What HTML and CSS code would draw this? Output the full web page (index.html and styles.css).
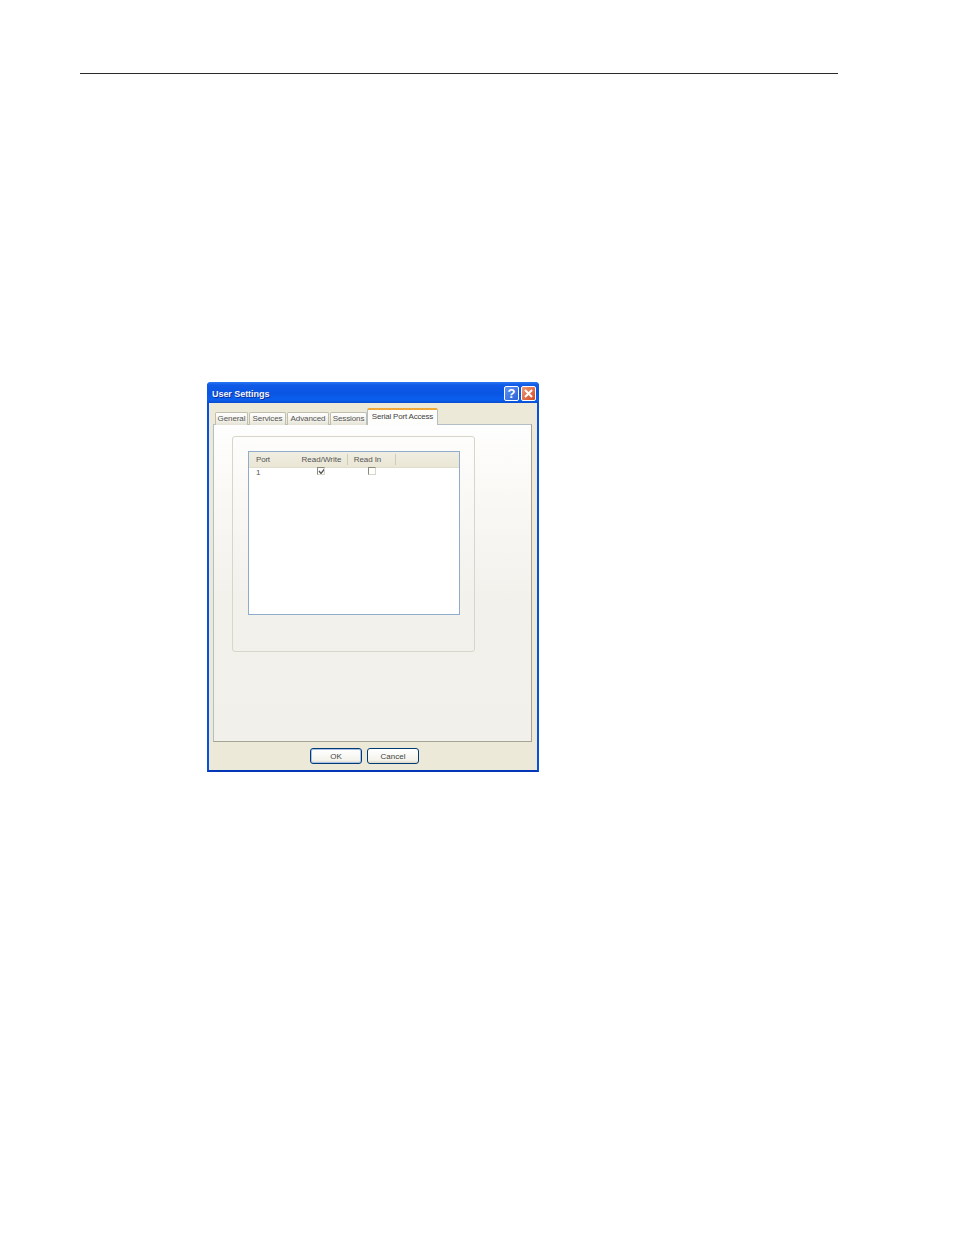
FILE: index.html
```html
<!DOCTYPE html>
<html lang="en">
<head>
<meta charset="utf-8">
<title>User Settings</title>
<link rel="stylesheet" href="styles.css">
</head>
<body>
<div class="rule"></div>
<div class="dialog">
  <div class="titlebar">
    <span class="title">User Settings</span>
    <span class="winbtn help">?</span>
    <span class="winbtn close">
      <svg width="11" height="11" viewBox="0 0 11 11"><path d="M2 2L9 9M9 2L2 9" stroke="#fff" stroke-width="2" fill="none"/></svg>
    </span>
  </div>
  <div class="body">
    <div class="tabs">
      <div class="tab t1">General</div>
      <div class="tab t2">Services</div>
      <div class="tab t3">Advanced</div>
      <div class="tab t4">Sessions</div>
      <div class="tab active">Serial Port Access</div>
    </div>
    <div class="panel">
      <div class="group">
        <div class="list">
          <div class="head">
            <div class="hc c1">Port</div>
            <div class="hc c2">Read/Write</div>
            <div class="hc c3">Read In</div>
          </div>
          <div class="row">
            <div class="cell c1">1</div>
            <div class="cell c2"><span class="check"><svg width="7" height="7" viewBox="0 0 7 7"><path d="M1 3L3 5.5L6.5 1" stroke="#555" stroke-width="1.3" fill="none"/></svg></span></div>
            <div class="cell c3"><span class="check off"></span></div>
          </div>
        </div>
      </div>
    </div>
    <div class="buttons">
      <div class="btn default">OK</div>
      <div class="btn">Cancel</div>
    </div>
  </div>
</div>
</body>
</html>
```
FILE: styles.css
```css
html, body { margin: 0; padding: 0; background: #fff; }
body { font-family: "Liberation Sans", Arial, sans-serif; height: 1235px; overflow: hidden; }
.rule { height: 1px; width: 758px; margin: 73px 0 0 80px; background: #2a2a2a; }
.dialog {
  box-sizing: border-box; width: 332px; height: 390px; margin: 308px 0 0 207px;
  border: 2px solid #0a50d8; border-top: 0; border-radius: 4px 4px 0 0;
  background: #ece9d8; display: flex; flex-direction: column;
  border-bottom-color: #0437b8;
}
.titlebar {
  height: 21px; margin: 0 -2px; padding: 2px 3px 0 5px; box-sizing: border-box; display: flex; align-items: center; gap: 2px;
  flex: none;
  border-radius: 4px 4px 0 0;
  background: linear-gradient(#2a78f4 0, #0f5ae6 3px, #0a55e2 50%, #0b5fee 85%, #0a4cd0 100%);
}
.title { flex: 1; color: #f4f6fc; font-size: 9px; line-height: 13px; padding-top: 2px; font-weight: bold; text-shadow: 1px 1px 0 #0a2f9c; letter-spacing: -0.05px; }
.winbtn {
  box-sizing: border-box; width: 15px; height: 15px; border: 1px solid #fff; border-radius: 2px; margin-top: -1px;
  display: flex; align-items: center; justify-content: center; color: #fff; font-weight: bold; font-size: 13px; line-height: 1;
}
.help { background: linear-gradient(135deg, #5f93f2, #2a62d8); }
.close { background: linear-gradient(135deg, #ee9a78, #d04c24); }
.body { flex: 1; display: flex; flex-direction: column; padding: 0 4px; min-height: 0; }
.tabs { height: 22px; flex: none; display: flex; align-items: flex-end; padding-left: 2px; gap: 1px; margin-bottom: -1px; position: relative; z-index: 1; }
.tab {
  box-sizing: border-box; height: 13px; font-size: 8px; line-height: 11px; text-align: center; color: #555;
  border: 1px solid #c0bead; border-bottom: 0; border-radius: 2px 2px 0 0;
  background: linear-gradient(#fff, #f0efe6 70%, #e4e2d4);
  letter-spacing: -0.1px;
}
.t1 { width: 33px; }
.t2 { width: 37px; }
.t3 { width: 42px; }
.t4 { width: 37px; }
.active {
  width: 71px; height: 17px; line-height: 14px; margin-left: -1px; background: #fdfdfb; border-top: 2px solid #f0a83a;
  color: #444; font-size: 8px; letter-spacing: -0.2px; border-left-color: #b4bec6; border-right-color: #b4bec6;
}
.panel {
  box-sizing: border-box; flex: none; width: 319px; height: 318px; padding: 11px 0 0 18px;
  border: 1px solid #b4bec6; border-bottom-color: #a5a395; border-right-color: #a5a395;
  background: linear-gradient(#fefefe 0, #faf9f6 20%, #f3f1ec 55%, #f2f0ea 100%);
}
.group {
  box-sizing: border-box; width: 243px; height: 216px; padding: 14px 0 0 15px;
  border: 1px solid #d8d6c8; border-radius: 3px;
}
.list { box-sizing: border-box; width: 212px; height: 164px; border: 1px solid #8fadca; background: #fff; }
.head { height: 15px; display: flex; align-items: center; background: linear-gradient(#f0eee2, #e9e6d5); border-bottom: 1px solid #e0ddcc; }
.hc { font-size: 8px; color: #555; height: 11px; line-height: 11px; text-align: center; box-sizing: border-box; border-right: 1px solid #cfccb8; }
.c1 { width: 28px; padding-left: 7px; text-align: left; }
.hc.c1 { width: 47px; border-right: 0; letter-spacing: -0.2px; }
.hc.c2 { width: 52px; }
.hc.c3 { width: 48px; padding-right: 8px; letter-spacing: -0.1px; }
.row { display: flex; height: 8px; align-items: flex-start; font-size: 8px; color: #555; }
.cell { line-height: 9px; }
.cell.c1 { width: 68px; padding-left: 7px; box-sizing: border-box; }
.cell.c2 { width: 51px; }
.check { box-sizing: border-box; display: block; width: 8px; height: 8px; border: 1px solid #8a8a7c; border-bottom-color: #d8d6c8; border-right-color: #d8d6c8; background: #fff; margin-top: -1px; overflow: hidden; }
.check svg { display: block; }
.cell.c3 { width: 40px; }
.buttons { display: flex; justify-content: flex-start; gap: 5px; padding: 6px 0 0 97px; }
.btn {
  box-sizing: border-box; width: 52px; height: 16px; font-size: 8px; line-height: 15px; text-align: center; color: #444;
  border: 1px solid #003c74; border-radius: 3px; background: linear-gradient(#fff, #f4f3ec 80%, #dcd8c8);
}
.default { box-shadow: inset 0 0 0 1px #a8c0ea; }
```
